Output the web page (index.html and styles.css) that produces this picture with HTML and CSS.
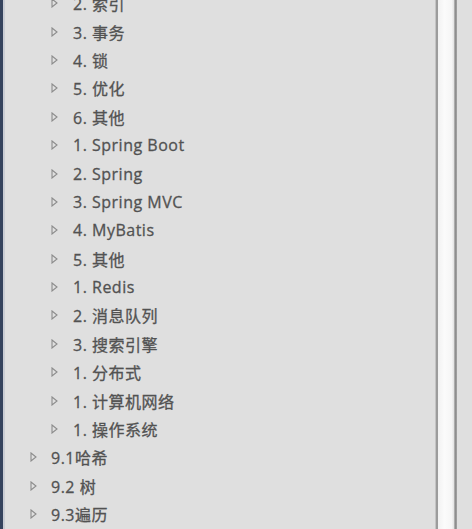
FILE: index.html
```html
<!DOCTYPE html>
<html lang="zh">
<head>
<meta charset="utf-8">
<link rel="stylesheet" href="styles.css">
</head>
<body>
<div class="frame">
  <div class="edge"></div>
  <div class="edge-light"></div>
  <ul class="tree">
    <li class="item l2"><svg class="tri" viewBox="0 0 7 10"><polygon points="1,1 6,5 1,9"/></svg>2. 索引</li>
    <li class="item l2"><svg class="tri" viewBox="0 0 7 10"><polygon points="1,1 6,5 1,9"/></svg>3. 事务</li>
    <li class="item l2"><svg class="tri" viewBox="0 0 7 10"><polygon points="1,1 6,5 1,9"/></svg>4. 锁</li>
    <li class="item l2"><svg class="tri" viewBox="0 0 7 10"><polygon points="1,1 6,5 1,9"/></svg>5. 优化</li>
    <li class="item l2"><svg class="tri" viewBox="0 0 7 10"><polygon points="1,1 6,5 1,9"/></svg>6. 其他</li>
    <li class="item l2"><svg class="tri" viewBox="0 0 7 10"><polygon points="1,1 6,5 1,9"/></svg>1. Spring Boot</li>
    <li class="item l2"><svg class="tri" viewBox="0 0 7 10"><polygon points="1,1 6,5 1,9"/></svg>2. Spring</li>
    <li class="item l2"><svg class="tri" viewBox="0 0 7 10"><polygon points="1,1 6,5 1,9"/></svg>3. Spring MVC</li>
    <li class="item l2"><svg class="tri" viewBox="0 0 7 10"><polygon points="1,1 6,5 1,9"/></svg>4. MyBatis</li>
    <li class="item l2"><svg class="tri" viewBox="0 0 7 10"><polygon points="1,1 6,5 1,9"/></svg>5. 其他</li>
    <li class="item l2"><svg class="tri" viewBox="0 0 7 10"><polygon points="1,1 6,5 1,9"/></svg>1. Redis</li>
    <li class="item l2"><svg class="tri" viewBox="0 0 7 10"><polygon points="1,1 6,5 1,9"/></svg>2. 消息队列</li>
    <li class="item l2"><svg class="tri" viewBox="0 0 7 10"><polygon points="1,1 6,5 1,9"/></svg>3. 搜索引擎</li>
    <li class="item l2"><svg class="tri" viewBox="0 0 7 10"><polygon points="1,1 6,5 1,9"/></svg>1. 分布式</li>
    <li class="item l2"><svg class="tri" viewBox="0 0 7 10"><polygon points="1,1 6,5 1,9"/></svg>1. 计算机网络</li>
    <li class="item l2"><svg class="tri" viewBox="0 0 7 10"><polygon points="1,1 6,5 1,9"/></svg>1. 操作系统</li>
    <li class="item l1"><svg class="tri" viewBox="0 0 7 10"><polygon points="1,1 6,5 1,9"/></svg>9.1哈希</li>
    <li class="item l1"><svg class="tri" viewBox="0 0 7 10"><polygon points="1,1 6,5 1,9"/></svg>9.2 树</li>
    <li class="item l1"><svg class="tri" viewBox="0 0 7 10"><polygon points="1,1 6,5 1,9"/></svg>9.3遍历</li>
  </ul>
  <div class="scroll">
    <div class="line-a"></div>
    <div class="thumb"></div>
    <div class="line-b"></div>
  </div>
  <div class="gutter"></div>
</div>
</body>
</html>
```
FILE: styles.css
```css
html, body {
  margin: 0;
  padding: 0;
  height: 100%;
  background: #dfdfdf;
  overflow: hidden;
}
.frame {
  display: flex;
  height: 529px;
  width: 472px;
  overflow: hidden;
}
.edge {
  width: 3px;
  background: #35435d;
  flex: none;
}
.edge-light {
  width: 2px;
  background: #c9ccd3;
  flex: none;
}
.tree {
  list-style: none;
  margin: -11px 0 0 0;
  padding: 0;
  flex: 1;
  font-family: "Open Sans", "Noto Sans CJK SC", sans-serif;
  font-size: 16px;
  font-weight: 400;
  letter-spacing: 0.5px;
  color: #525252;
  -webkit-text-stroke: 0.3px #525252;
}
.item {
  height: 28.4px;
  display: flex;
  align-items: center;
  white-space: nowrap;
}
.l2 { padding-left: 46px; }
.l1 { padding-left: 25px; }
.tri {
  width: 7px;
  height: 10px;
  margin-right: 15px;
  flex: none;
  fill: none;
  stroke: #8c8c8c;
  stroke-width: 1.1;
  stroke-linejoin: miter;
}
.l1 .tri { margin-right: 14px; }
.scroll {
  display: flex;
  flex: none;
}
.line-a {
  width: 2px;
  background: #9c9c9c;
  box-shadow: -1px 0 0 #c4c4c4;
}
.thumb {
  width: 16px;
  background: linear-gradient(to right, #f2f2f2, #fbfbfb 40%, #f6f6f6 85%, #e2e2e2);
}
.line-b {
  width: 3px;
  background: linear-gradient(to right, #bdbdbd, #8e8e8e, #a5a5a5);
}
.gutter {
  width: 15px;
  flex: none;
}
```
